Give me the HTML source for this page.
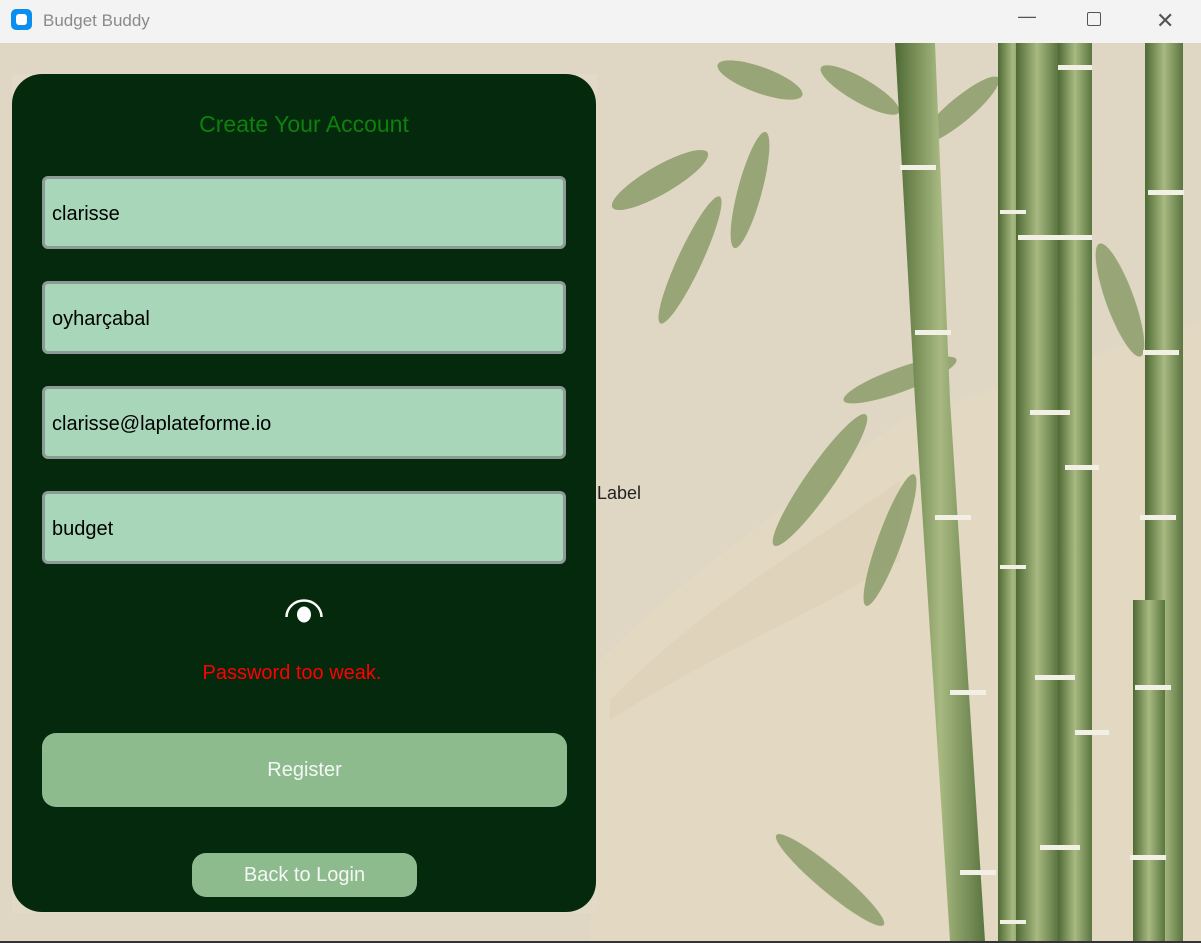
<!DOCTYPE html>
<html><head><meta charset="utf-8"><style>
*{margin:0;padding:0;box-sizing:border-box}
body{width:1201px;height:943px;overflow:hidden;background:#e0d6c4;font-family:"Liberation Sans",sans-serif;position:relative}
.title{position:absolute;left:0;top:0;width:1201px;height:43px;background:#f3f3f3;}
.title .ic{position:absolute;left:11px;top:9px;width:21px;height:21px;border-radius:5px;background:#0a8ff0}
.title .ic:after{content:"";position:absolute;left:5px;top:5px;width:11px;height:11px;border-radius:3px;background:#fff}
.title .t{position:absolute;left:43px;top:11px;font-size:17px;color:#8a8a8a}
.ctl{position:absolute;top:12px;font-size:18px;color:#555}
.bg{position:absolute;left:0;top:43px;width:1201px;height:898px}
.under{position:absolute;left:12px;top:74px;width:585px;height:839px;background:#e3d9c7}
.panel{position:absolute;left:12px;top:74px;width:584px;height:838px;background:#05290c;border-radius:30px}
.h{position:absolute;left:0;width:584px;top:111px;text-align:center;color:#0d800d;font-size:23px}
.in{position:absolute;left:42px;width:524px;height:73px;background:#a8d6b9;border:3px solid #8e9a97;border-radius:6px;font-size:20px;color:#000;padding:24px 0 0 7px}
.err{position:absolute;left:0;width:584px;top:662px;text-align:center;color:#f00;font-size:20px}
.btn{position:absolute;background:#8dbb8e;color:#f4f8f4;text-align:center;font-size:20px;border-radius:14px}
.lbl{position:absolute;left:597px;top:483px;font-size:18px;color:#222}
</style></head><body>
<div class="title"><div class="ic"></div><div class="t">Budget Buddy</div>
<div class="ctl" style="left:1018px;top:6px">&#8212;</div>
<div class="ctl" style="left:1087px;top:12px;width:14px;height:14px;border:1.5px solid #555;border-radius:2px"></div>
<div class="ctl" style="left:1156px;top:8px;font-size:22px">&#10005;</div></div>
<svg class="bg" viewBox="0 43 1201 898" width="1201" height="898">
<defs><linearGradient id="g" x1="0" x2="1"><stop offset="0" stop-color="#4f6a35"/><stop offset=".5" stop-color="#a8b981"/><stop offset="1" stop-color="#5a7540"/></linearGradient></defs>
<rect x="0" y="43" width="1201" height="898" fill="#e0d6c4"/>
<path d="M600 660 C700 560 800 500 900 420 L1201 320 L1201 941 L590 941 Z" fill="#e3d8c2"/>
<path d="M610 700 C720 590 820 540 900 480 L900 560 C820 610 720 650 610 720 Z" fill="#ddd0b6" opacity=".6"/>
<g fill="#8a9c6a" opacity=".85">
<ellipse cx="660" cy="180" rx="55" ry="14" transform="rotate(-30 660 180)"/>
<ellipse cx="760" cy="80" rx="45" ry="13" transform="rotate(20 760 80)"/>
<ellipse cx="690" cy="260" rx="70" ry="12" transform="rotate(-65 690 260)"/>
<ellipse cx="750" cy="190" rx="60" ry="12" transform="rotate(-75 750 190)"/>
<ellipse cx="860" cy="90" rx="45" ry="12" transform="rotate(30 860 90)"/>
<ellipse cx="820" cy="480" rx="80" ry="14" transform="rotate(-55 820 480)"/>
<ellipse cx="900" cy="380" rx="60" ry="12" transform="rotate(-20 900 380)"/>
<ellipse cx="890" cy="540" rx="70" ry="12" transform="rotate(-70 890 540)"/>
<ellipse cx="830" cy="880" rx="70" ry="12" transform="rotate(40 830 880)"/>
<ellipse cx="960" cy="110" rx="50" ry="12" transform="rotate(-40 960 110)"/>
<ellipse cx="1120" cy="300" rx="60" ry="14" transform="rotate(70 1120 300)"/>
</g>
<path d="M895 43 L935 43 L950 400 L985 941 L950 941 L915 400 Z" fill="url(#g)"/>
<rect x="998" y="43" width="30" height="898" fill="url(#g)"/>
<rect x="1016" y="43" width="42" height="898" fill="url(#g)"/>
<rect x="1058" y="43" width="34" height="898" fill="url(#g)"/>
<rect x="1145" y="43" width="38" height="898" fill="url(#g)"/>
<rect x="1133" y="600" width="32" height="341" fill="url(#g)"/>
<g fill="#f2efe4">
<rect x="900" y="165" width="36" height="5"/><rect x="915" y="330" width="36" height="5"/><rect x="935" y="515" width="36" height="5"/><rect x="950" y="690" width="36" height="5"/><rect x="960" y="870" width="36" height="5"/>
<rect x="1000" y="210" width="26" height="4"/><rect x="1000" y="565" width="26" height="4"/><rect x="1000" y="920" width="26" height="4"/>
<rect x="1018" y="235" width="40" height="5"/><rect x="1030" y="410" width="40" height="5"/><rect x="1035" y="675" width="40" height="5"/><rect x="1040" y="845" width="40" height="5"/>
<rect x="1058" y="65" width="34" height="5"/><rect x="1058" y="235" width="34" height="5"/><rect x="1065" y="465" width="34" height="5"/><rect x="1075" y="730" width="34" height="5"/>
<rect x="1148" y="190" width="36" height="5"/><rect x="1143" y="350" width="36" height="5"/><rect x="1140" y="515" width="36" height="5"/><rect x="1135" y="685" width="36" height="5"/><rect x="1130" y="855" width="36" height="5"/>
</g>
</svg>
<div class="under"></div>
<div class="panel">
<div class="h" style="top:37px">Create Your Account</div>
</div>
<div class="in" style="top:176px">clarisse</div>
<div class="in" style="top:281px">oyharçabal</div>
<div class="in" style="top:386px">clarisse@laplateforme.io</div>
<div class="in" style="top:491px">budget</div>
<svg style="position:absolute;left:284px;top:598px" width="40" height="28" viewBox="0 0 40 28"><path d="M2.5 19 A17 16 0 0 1 37.5 19" fill="none" stroke="#fff" stroke-width="2.5"/><ellipse cx="20" cy="16.5" rx="7" ry="8" fill="#fff"/></svg>
<div class="err">Password too weak.</div>
<div class="btn" style="left:42px;top:733px;width:525px;height:74px;line-height:74px">Register</div>
<div class="btn" style="left:192px;top:853px;width:225px;height:44px;line-height:44px">Back to Login</div>
<div class="lbl">Label</div>
<div style="position:absolute;left:0;top:941px;width:1201px;height:2px;background:#333"></div>
</body></html>
